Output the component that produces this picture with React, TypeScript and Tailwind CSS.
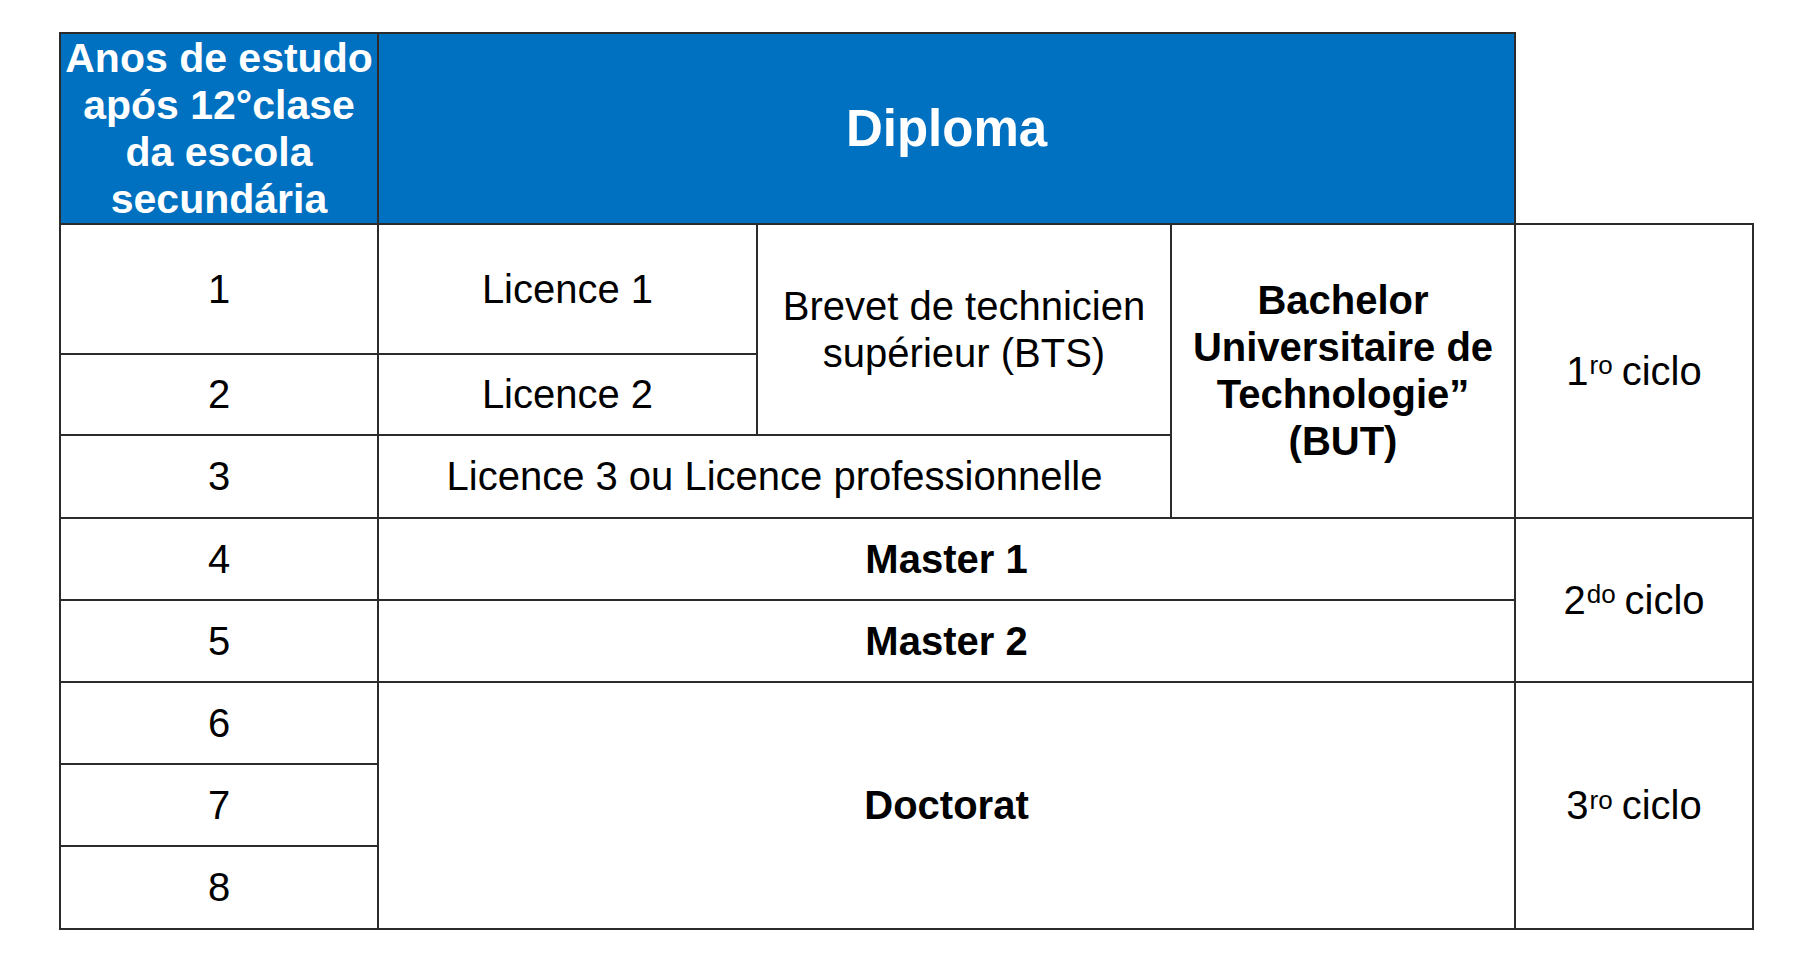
const cell = "border-2 border-[#2b2b2b] p-0 text-center align-middle";

function Ciclo({ n, sup }: { n: string; sup: string }) {
  return (
    <span className="whitespace-nowrap">
      {n}
      <sup className="text-[26px] ml-[1px] mr-[9px] top-[-0.4em]">{sup}</sup>
      ciclo
    </span>
  );
}

export default function App() {
  return (
    <div className="min-h-screen bg-white pl-[59px] pt-[32px] font-['Liberation_Sans',Arial,sans-serif] text-black">
      <table className="table-fixed border-collapse w-[1693px] text-[40px] leading-[47px]">
        <colgroup>
          <col className="w-[318px]" />
          <col className="w-[379px]" />
          <col className="w-[414px]" />
          <col className="w-[344px]" />
          <col className="w-[238px]" />
        </colgroup>
        <tbody>
          <tr className="h-[191px]">
            <th className={`${cell} bg-[#0070c0] text-white font-bold whitespace-nowrap text-[41px]`}>
              Anos de estudo
              <br />
              após 12°clase
              <br />
              da escola
              <br />
              secundária
            </th>
            <th colSpan={3} className={`${cell} bg-[#0070c0] text-white font-bold text-[51px]`}>
              Diploma
            </th>
            <td className="border-0 p-0" />
          </tr>
          <tr className="h-[130px]">
            <td className={cell}>1</td>
            <td className={cell}>Licence 1</td>
            <td rowSpan={2} className={cell}>
              Brevet de technicien
              <br />
              supérieur (BTS)
            </td>
            <td rowSpan={3} className={`${cell} font-bold`}>
              Bachelor
              <br />
              Universitaire de
              <br />
              Technologie”
              <br />
              (BUT)
            </td>
            <td rowSpan={3} className={cell}>
              <Ciclo n="1" sup="ro" />
            </td>
          </tr>
          <tr className="h-[81px]">
            <td className={cell}>2</td>
            <td className={cell}>Licence 2</td>
          </tr>
          <tr className="h-[83px]">
            <td className={cell}>3</td>
            <td colSpan={2} className={cell}>
              Licence 3 ou Licence professionnelle
            </td>
          </tr>
          <tr className="h-[82px]">
            <td className={cell}>4</td>
            <td colSpan={3} className={`${cell} font-bold`}>
              Master 1
            </td>
            <td rowSpan={2} className={cell}>
              <Ciclo n="2" sup="do" />
            </td>
          </tr>
          <tr className="h-[82px]">
            <td className={cell}>5</td>
            <td colSpan={3} className={`${cell} font-bold`}>
              Master 2
            </td>
          </tr>
          <tr className="h-[82px]">
            <td className={cell}>6</td>
            <td colSpan={3} rowSpan={3} className={`${cell} font-bold`}>
              Doctorat
            </td>
            <td rowSpan={3} className={cell}>
              <Ciclo n="3" sup="ro" />
            </td>
          </tr>
          <tr className="h-[82px]">
            <td className={cell}>7</td>
          </tr>
          <tr className="h-[83px]">
            <td className={cell}>8</td>
          </tr>
        </tbody>
      </table>
    </div>
  );
}
